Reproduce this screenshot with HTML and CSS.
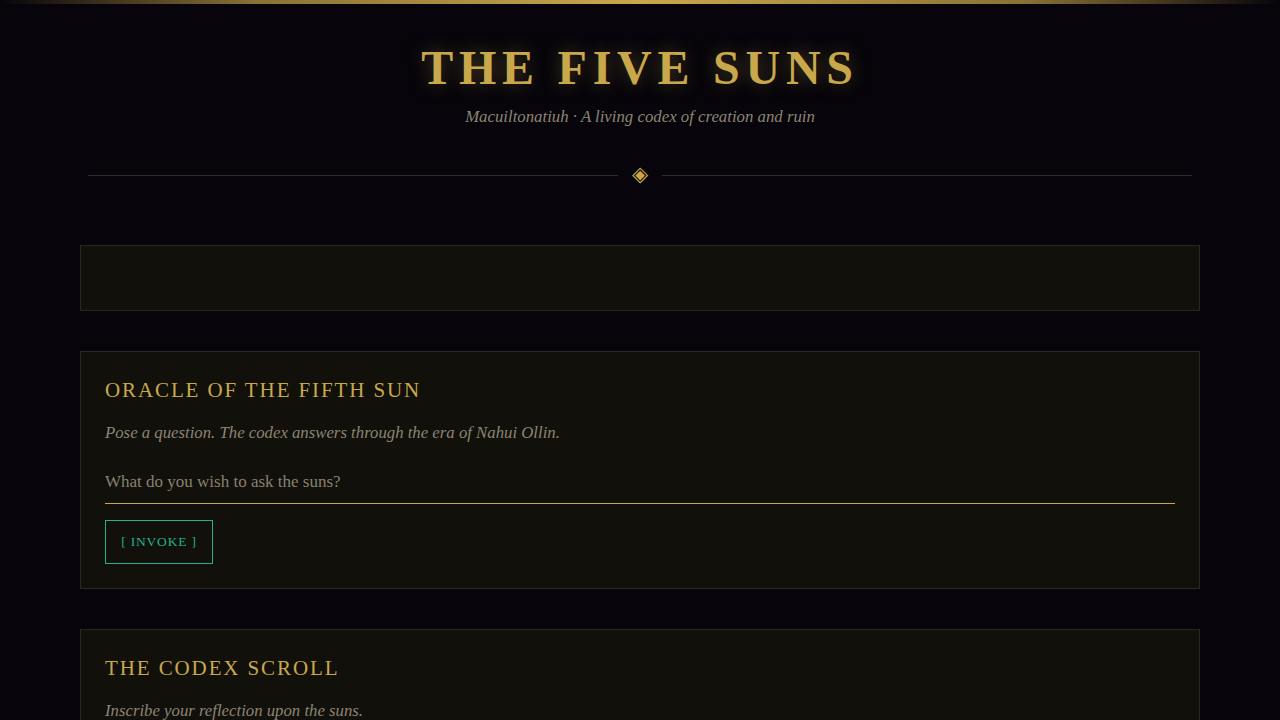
FILE: index.html
```html
<!DOCTYPE html>
<html lang="en">
<head>
<meta charset="utf-8">
<title>The Five Suns</title>
<link rel="stylesheet" href="styles.css">
</head>
<body>
<div class="topbar"></div>
<header class="hero">
  <h1 class="title">THE FIVE SUNS</h1>
  <p class="subtitle">Macuiltonatiuh · A living codex of creation and ruin</p>
  <div class="divider"><span class="line"></span><span class="gem">◈</span><span class="line"></span></div>
</header>
<main class="main">
  <section class="card card-empty"></section>
  <section class="card">
    <h2 class="card-title">ORACLE OF THE FIFTH SUN</h2>
    <p class="card-desc">Pose a question. The codex answers through the era of Nahui Ollin.</p>
    <input class="field" type="text" placeholder="What do you wish to ask the suns?">
    <button class="btn">[ INVOKE ]</button>
  </section>
  <section class="card">
    <h2 class="card-title">THE CODEX SCROLL</h2>
    <p class="card-desc">Inscribe your reflection upon the suns.</p>
  </section>
</main>
</body>
</html>
```
FILE: styles.css
```css
html, body { margin: 0; padding: 0; }
body {
  background: #07050b;
  color: #a09683;
  font-family: "Liberation Serif", serif;
  overflow: hidden;
}
.topbar {
  height: 4px;
  background: linear-gradient(90deg, rgba(201,168,76,0) 0%, #8a7236 20%, #c9a84c 50%, #8a7236 80%, rgba(201,168,76,0) 100%);
}
.hero { text-align: center; padding-top: 36px; }
.title {
  margin: 0;
  font-family: "Liberation Serif", serif;
  font-weight: 700;
  font-size: 48px;
  letter-spacing: 0.12em;
  line-height: 56px;
  color: #c9a84c;
  text-shadow: 0 0 18px rgba(201,168,76,0.35);
}
.subtitle {
  margin: 11px 0 0;
  font-style: italic;
  font-size: 16.8px;
  color: #8d8472;
}
.divider {
  display: flex;
  align-items: center;
  justify-content: center;
  gap: 14px;
  margin: 38px 88px 0;
}
.line { flex: 1; height: 1px; background: #2e2a26; }
.gem { color: #c9a84c; font-size: 21px; line-height: 18px; height: 20px; width: 16px; display: flex; justify-content: center; }
.main {
  padding: 60px 80px 0;
  display: flex;
  flex-direction: column;
  gap: 40px;
}
.card {
  background: #11100b;
  border: 1px solid #2a2820;
  padding: 24px 24px 24px;
}
.card-empty { height: 16px; }
.card-title {
  margin: 0;
  font-weight: 400;
  font-size: 21px;
  letter-spacing: 0.09em;
  color: #c9a84c;
  line-height: 28px;
}
.card-desc {
  margin: 17px 0 0;
  font-style: italic;
  font-size: 16.75px;
  color: #8d8472;
  line-height: 24px;
}
.field {
  display: block;
  width: 100%;
  box-sizing: border-box;
  margin-top: 25px;
  background: transparent;
  border: none;
  border-bottom: 1px solid #c9a84c;
  padding: 0 0 9px;
  font-family: "Liberation Serif", serif;
  font-size: 17px;
  line-height: 24px;
  color: #a09683;
  outline: none;
}
.field::placeholder { color: #8a8170; }
.btn {
  display: block;
  margin-top: 16px;
  background: transparent;
  border: 1px solid #22b38e;
  color: #22b38e;
  font-family: "Liberation Serif", serif;
  font-size: 13.5px;
  letter-spacing: 0.06em;
  white-space: nowrap;
  padding: 0;
  height: 44px;
  width: 108px;
}
```
